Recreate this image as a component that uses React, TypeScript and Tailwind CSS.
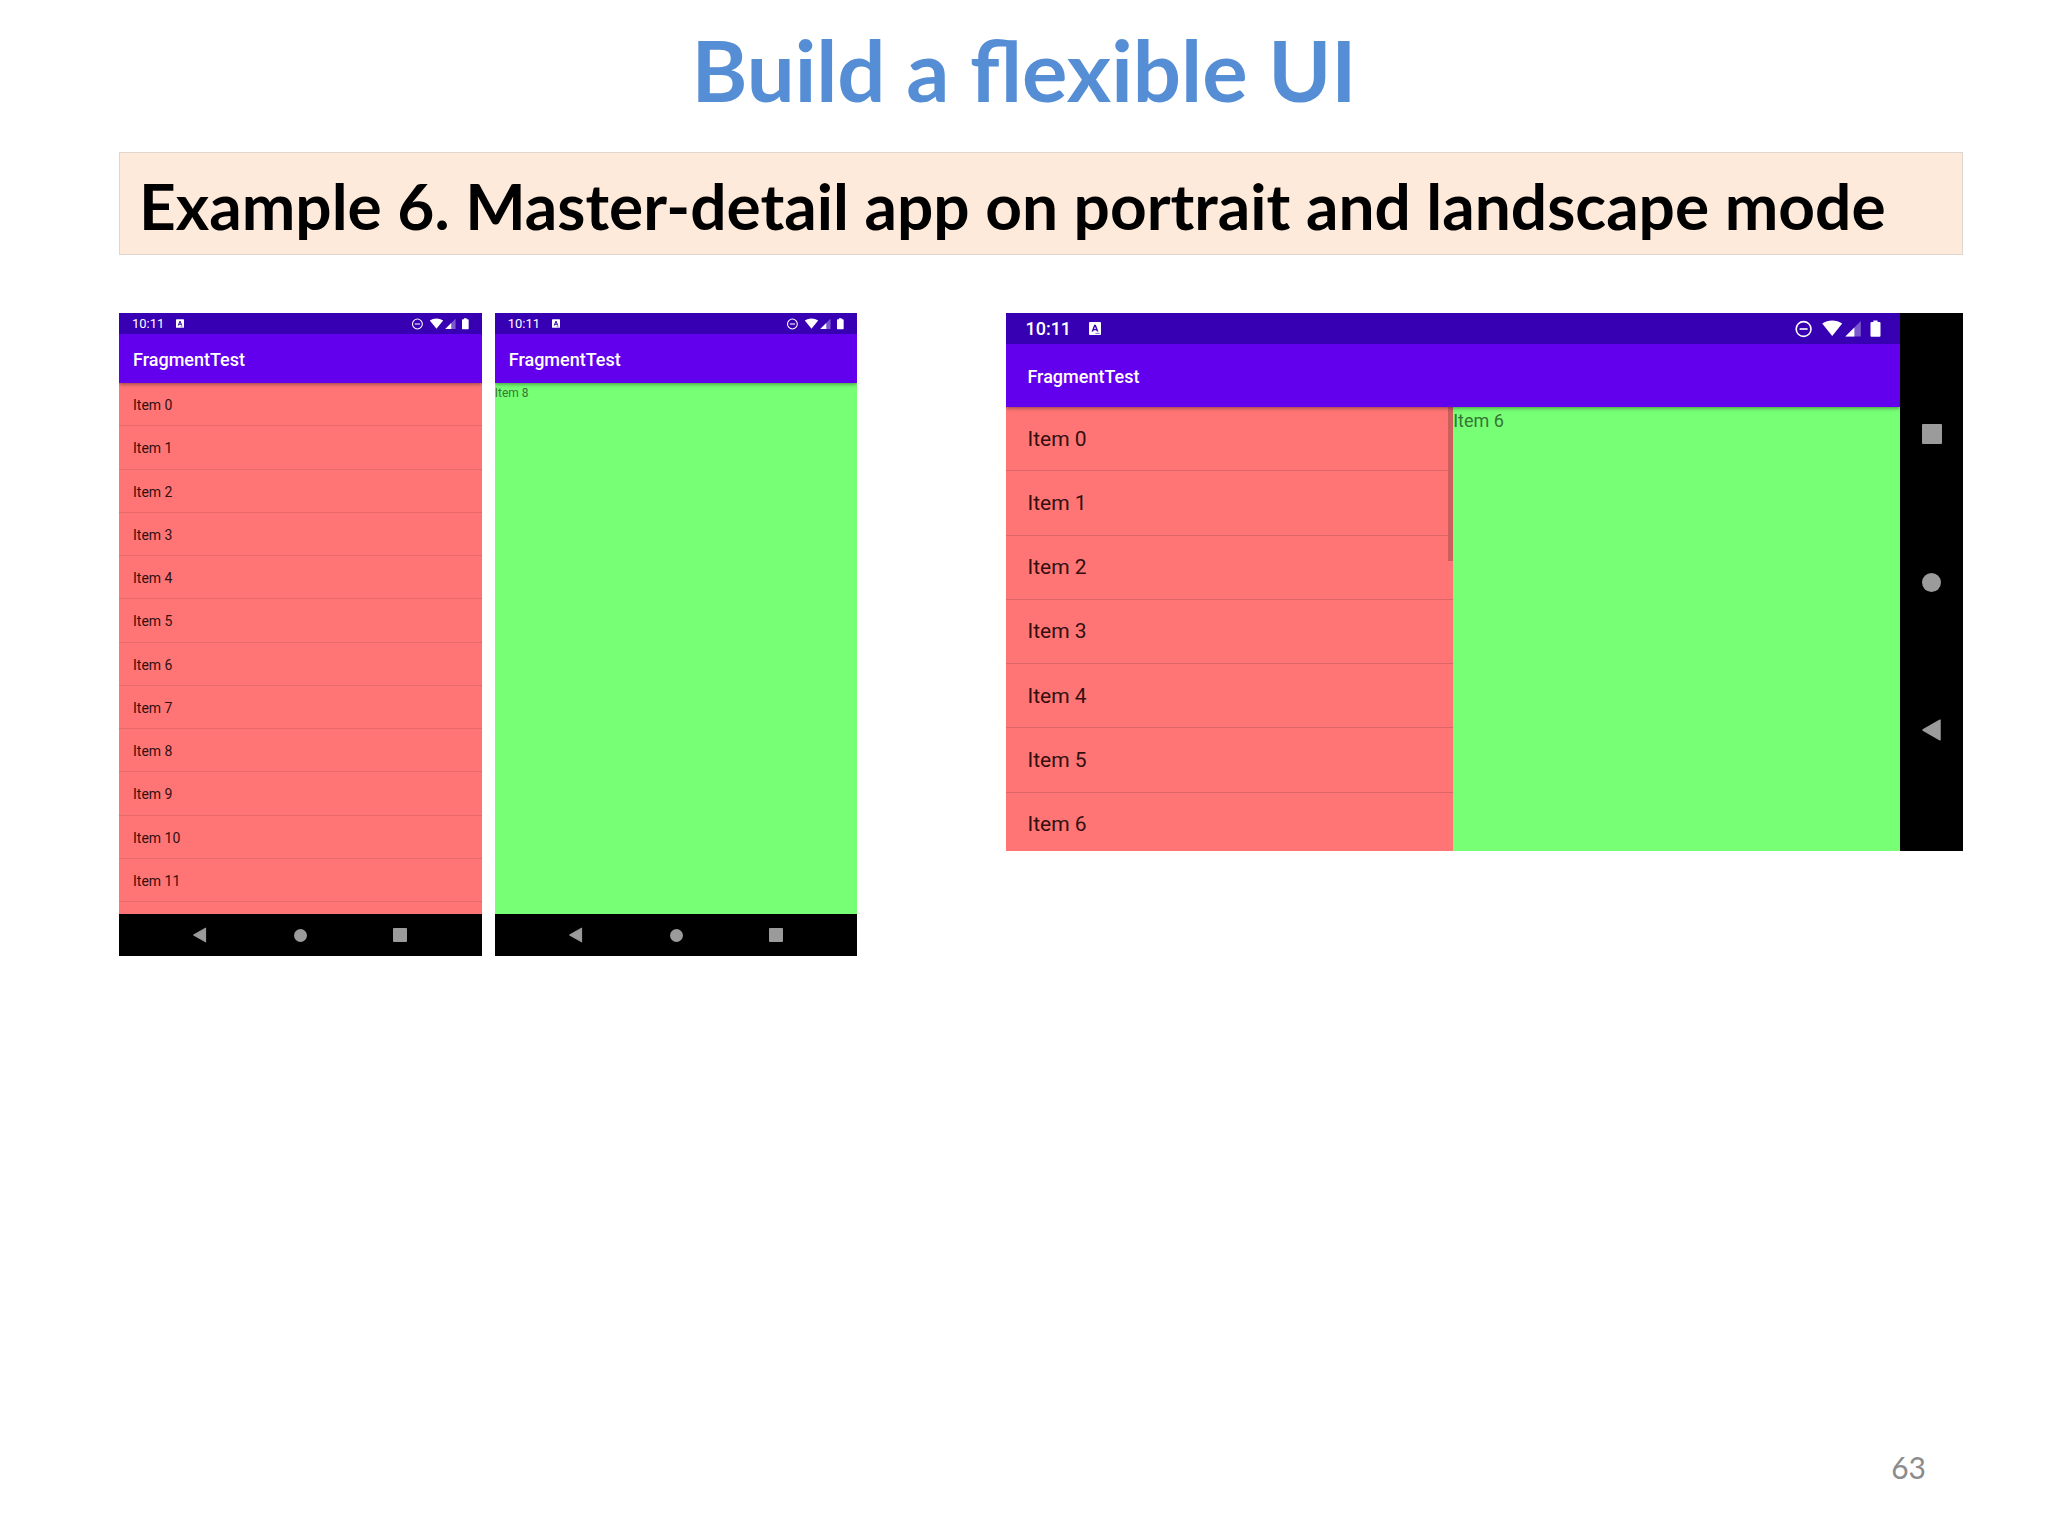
import { clsx } from 'clsx';

const PORTRAIT_ITEMS = Array.from({ length: 12 }, (_, i) => `Item ${i}`);
const LANDSCAPE_ITEMS = Array.from({ length: 7 }, (_, i) => `Item ${i}`);

function KeyboardIcon({ className }: { className?: string }) {
  return (
    <svg viewBox="0 0 12 13" className={className} aria-hidden="true">
      <rect width="12" height="13" rx="1" fill="#fff" />
      <path
        d="M2.6 9.6 5.2 2.8h1.6l2.6 6.8H7.8l-.5-1.4H4.7l-.5 1.4zM5.1 6.9h1.8L6 4.5z"
        fill="#3700b3"
        fillRule="evenodd"
      />
      <path d="M6.5 11.4h4.2" stroke="#3700b3" strokeWidth="0.6" />
    </svg>
  );
}

function StatusIcons({ className }: { className?: string }) {
  return (
    <svg viewBox="0 0 87 18" className={className} aria-hidden="true">
      <circle cx="9.6" cy="9" r="7.4" fill="none" stroke="#fff" strokeWidth="1.6" />
      <path d="M5.6 9h8" stroke="#fff" strokeWidth="1.6" />
      <path d="M28.2 3.6C34-.4 42.4-.4 48.2 3.6L38.2 16z" fill="#fff" />
      <path d="M66.8 1v15.6H51.4z" fill="#fff" opacity="0.35" />
      <path d="M60.4 7.4v9.2h-9z" fill="#fff" />
      <path
        d="M79.4 2V.4h4.2V2h1.9q1 0 1 1v12.8q0 1-1 1h-8q-1 0-1-1V3q0-1 1-1z"
        fill="#fff"
      />
    </svg>
  );
}

function BackIcon({ className }: { className?: string }) {
  return (
    <svg viewBox="0 0 20 22" className={className} aria-hidden="true">
      <path d="M1 11 18 1.2v19.6z" fill="#9b9b9b" stroke="#9b9b9b" strokeWidth="1.5" strokeLinejoin="round" />
    </svg>
  );
}

function NavBar({ vertical = false }: { vertical?: boolean }) {
  const buttons = [
    <button key="back" aria-label="Back" className="flex size-5 items-center justify-center">
      <BackIcon className={vertical ? 'h-[22px] w-5' : 'h-4 w-[14px]'} />
    </button>,
    <button key="home" aria-label="Home" className="flex size-5 items-center justify-center">
      <span className={clsx('rounded-full bg-[#9b9b9b]', vertical ? 'size-[19px]' : 'size-[13px]')} />
    </button>,
    <button key="recent" aria-label="Recent apps" className="flex size-5 items-center justify-center">
      <span className={clsx('rounded-[1px] bg-[#9b9b9b]', vertical ? 'size-5' : 'size-[14px]')} />
    </button>,
  ];

  return vertical ? (
    <nav className="flex w-[63px] shrink-0 flex-col items-center justify-center gap-32 bg-black">
      {buttons.reverse()}
    </nav>
  ) : (
    <nav className="flex h-[42px] shrink-0 items-center justify-center gap-20 bg-black">{buttons}</nav>
  );
}

function AppHeader({ large = false }: { large?: boolean }) {
  return (
    <header className="relative z-10 shrink-0 text-white shadow-[0_1px_4px_rgba(0,0,0,0.45)]">
      <div
        className={clsx(
          'flex items-center bg-[#3700b3]',
          large ? 'h-[31px] px-[19px]' : 'h-[21px] px-[13px]',
        )}
      >
        <span className={large ? 'text-[18px] leading-6 font-medium' : 'text-[13px] leading-5'}>
          10:11
        </span>
        <KeyboardIcon className={large ? 'ml-[18px] h-[13px] w-3' : 'ml-3 h-[9px] w-2'} />
        <StatusIcons className={large ? 'ml-auto h-[18px] w-[87px]' : 'ml-auto h-3 w-[58px]'} />
      </div>
      <div
        className={clsx(
          'flex items-center bg-[#6200ee] pt-0.5',
          large ? 'h-[63px] pl-[21px]' : 'h-[49px] pl-[14px]',
        )}
      >
        <h2 className="text-[18px] leading-6 font-medium">FragmentTest</h2>
      </div>
    </header>
  );
}

function PortraitPhone({ children }: { children: React.ReactNode }) {
  return (
    <section className="flex h-[643px] min-w-0 flex-col overflow-hidden">
      <AppHeader />
      {children}
      <NavBar />
    </section>
  );
}

export default function App() {
  return (
    <div className="flex min-h-screen flex-col bg-white pr-[85px] pl-[119px] font-['Roboto',sans-serif]">
      <h1 className="mt-[17px] -ml-[34px] text-center font-['Lato',sans-serif] text-[85px] leading-[104px] font-bold text-[#558ed5]">
        Build a flexible UI
      </h1>

      <div className="mt-[31px] border border-[#ded5cf] bg-[#fdeada] px-[19px] pt-[14px] pb-[10px]">
        <p className="font-['Lato',sans-serif] text-[64px] leading-[77px] font-bold whitespace-nowrap text-black">
          Example 6. Master-detail app on portrait and landscape mode
        </p>
      </div>

      <main className="mt-[58px] grid grid-cols-[738fr_956fr] items-start gap-[149px]">
        <div className="grid grid-cols-2 gap-[13px]">
          <PortraitPhone>
            <ul className="flex min-h-0 flex-1 flex-col bg-[#ff7575] pb-3">
              {PORTRAIT_ITEMS.map((item) => (
                <li key={item} className="flex flex-1 border-b border-[#e66a6a]">
                  <button className="flex-1 pt-0.5 pl-[14px] text-left text-[14px] leading-5 text-[#330f0f]">
                    {item}
                  </button>
                </li>
              ))}
            </ul>
          </PortraitPhone>
          <PortraitPhone>
            <div className="flex-1 bg-[#77ff75]">
              <p className="text-[12px] leading-5 text-[#367535]">Item 8</p>
            </div>
          </PortraitPhone>
        </div>

        <section className="flex h-[538px] min-w-0 overflow-hidden">
          <div className="flex min-w-0 flex-1 flex-col">
            <AppHeader large />
            <div className="grid min-h-0 flex-1 grid-cols-2">
              <div className="relative overflow-hidden bg-[#ff7575]">
                <ul className="flex h-[450px] flex-col">
                  {LANDSCAPE_ITEMS.map((item) => (
                    <li key={item} className="flex flex-1 border-b border-[#dc6565]">
                      <button className="flex-1 pl-[21px] text-left text-[21px] leading-6 text-[#330f0f]">
                        {item}
                      </button>
                    </li>
                  ))}
                </ul>
                {/* scroll thumb */}
                <div className="absolute top-0 right-0 h-[154px] w-[5px] bg-[#cc5e5e]" />
              </div>
              <div className="bg-[#77ff75]">
                <p className="text-[18px] leading-7 text-[#367535]">Item 6</p>
              </div>
            </div>
          </div>
          <NavBar vertical />
        </section>
      </main>

      <footer className="mt-auto pr-[37px] pb-[49px] text-right font-['Lato',sans-serif] text-[30px] leading-10 text-[#8b8b8b]">
        63
      </footer>
    </div>
  );
}
